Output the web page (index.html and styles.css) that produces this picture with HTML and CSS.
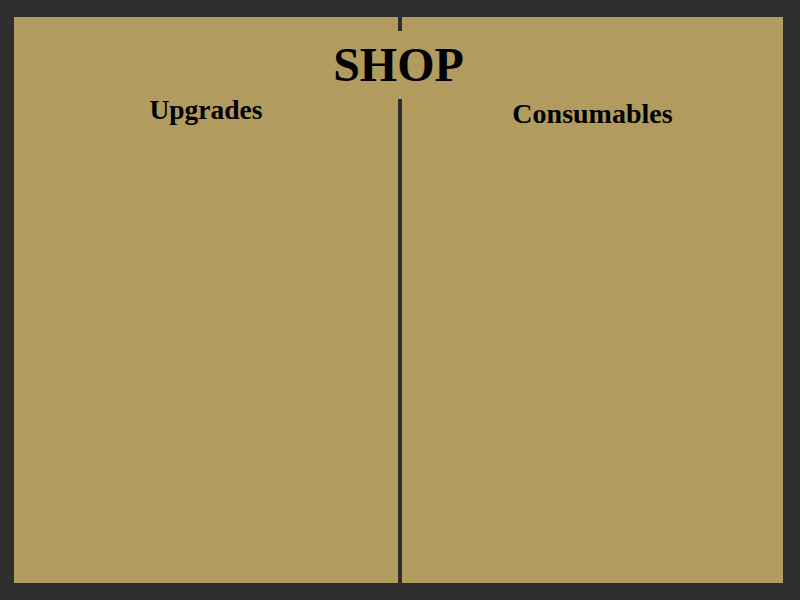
FILE: index.html
```html
<!DOCTYPE html>
<html lang="en">
<head>
    <meta charset="UTF-8">
    <meta name="viewport" content="width=device-width, initial-scale=1.0">
    <title>Shop</title>
    <link rel="stylesheet" href="styles.css">
</head>
<body>
    <div class="shop">
        <h1 class="shop-title">SHOP</h1>
        <div class="column upgrades">
            <h2>Upgrades</h2>
        </div>
        <div class="divider"></div>
        <div class="column consumables">
            <h2>Consumables</h2>
        </div>
    </div>
</body>
</html>
```
FILE: styles.css
```css
html, body {
    height: 100%;
}

body {
    margin: 0;
    background-color: #2e2e2e;
    font-family: "Liberation Serif", "DejaVu Serif", serif;
    color: #000;
    box-sizing: border-box;
    padding: 17px 17px 17px 14px;
}

.shop {
    position: relative;
    display: grid;
    grid-template-columns: 384px 4px 1fr;
    height: 566px;
    background-color: #b29b5e;
}

.shop-title {
    position: absolute;
    top: 14px;
    left: 50%;
    transform: translateX(-50%);
    margin: 0;
    padding: 0 12px;
    height: 68px;
    line-height: 68px;
    font-size: 48px;
    font-weight: bold;
    background-color: #b29b5e;
}

.divider {
    background-color: #2e2e2e;
}

.column h2 {
    margin: 0;
    text-align: center;
    font-size: 27px;
    line-height: 32px;
    font-weight: bold;
}

.upgrades h2 {
    padding-top: 77px;
    font-size: 27.5px;
}

.consumables h2 {
    padding-top: 81px;
    font-size: 28px;
}
```
